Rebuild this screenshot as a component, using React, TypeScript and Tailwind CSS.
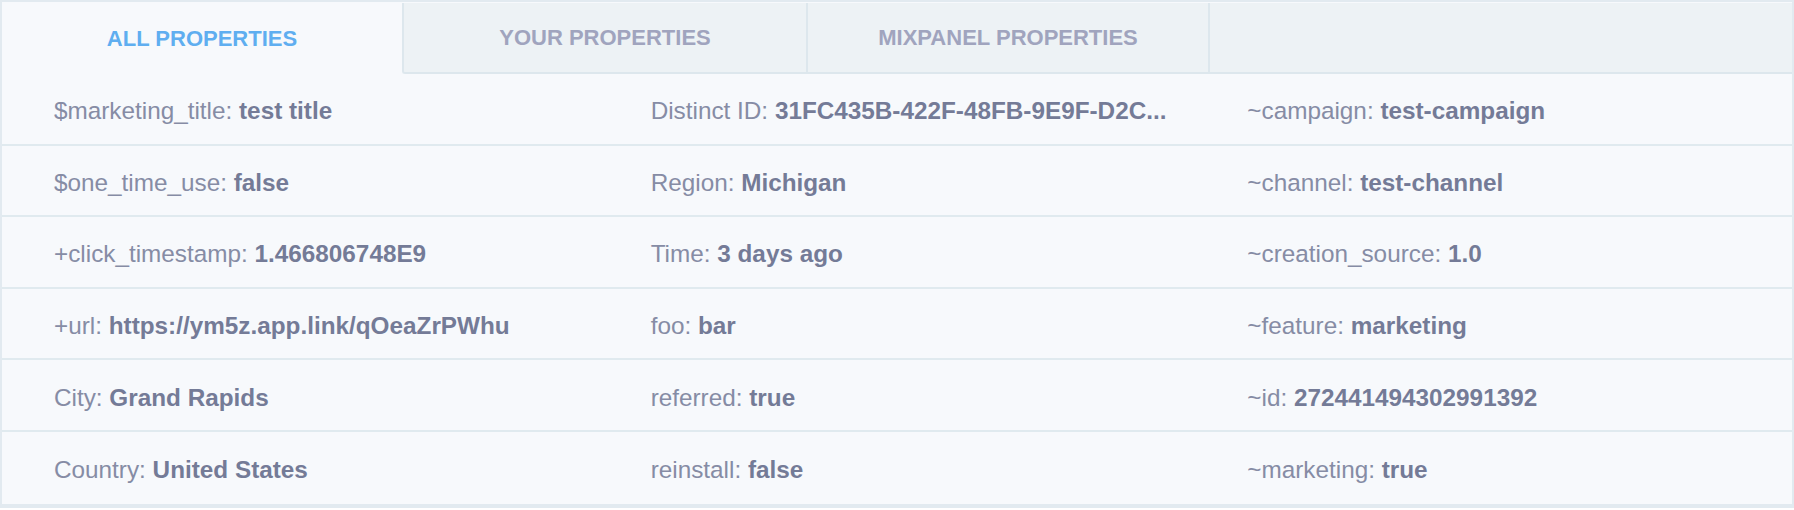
import React from "react";

const rows: [string, string][][] = [
  [
    ["$marketing_title", "test title"],
    ["Distinct ID", "31FC435B-422F-48FB-9E9F-D2C..."],
    ["~campaign", "test-campaign"],
  ],
  [
    ["$one_time_use", "false"],
    ["Region", "Michigan"],
    ["~channel", "test-channel"],
  ],
  [
    ["+click_timestamp", "1.466806748E9"],
    ["Time", "3 days ago"],
    ["~creation_source", "1.0"],
  ],
  [
    ["+url", "https://ym5z.app.link/qOeaZrPWhu"],
    ["foo", "bar"],
    ["~feature", "marketing"],
  ],
  [
    ["City", "Grand Rapids"],
    ["referred", "true"],
    ["~id", "272441494302991392"],
  ],
  [
    ["Country", "United States"],
    ["reinstall", "false"],
    ["~marketing", "true"],
  ],
];

export default function App() {
  return (
    <div
      className="w-[1794px] h-[510px] bg-white"
      style={{ fontFamily: '"Liberation Sans", Arial, sans-serif' }}
    >
      <div className="flex flex-col w-full border-2 border-b-[4px] border-[#e2eaf0] bg-[#f7f9fc]">
        <div className="flex h-[72px] pt-[1px]">
          <div className="w-[400px] flex items-center justify-center text-[22px] font-bold text-[#5faef0]">
            ALL PROPERTIES
          </div>
          <div className="w-[404px] flex items-center justify-center text-[22px] font-bold text-[#a0a4be] bg-[#edf2f5] border-l-2 border-b-2 border-[#dde7ed] rounded-bl-[3px]">
            YOUR PROPERTIES
          </div>
          <div className="w-[402px] flex items-center justify-center text-[22px] font-bold text-[#a0a4be] bg-[#edf2f5] border-l-2 border-b-2 border-[#dde7ed]">
            MIXPANEL PROPERTIES
          </div>
          <div className="flex-1 bg-[#edf2f5] border-l-2 border-b-2 border-[#dde7ed]" />
        </div>
        {rows.map((row, i) => (
          <div
            key={i}
            className={`grid grid-cols-3 h-[71.6px] pt-[5px] items-center ${
              i < rows.length - 1 ? "border-b-2 border-[#e0eaef]" : ""
            }`}
          >
            {row.map(([k, v], j) => (
              <div key={j} className="pl-[52px] text-[24.3px] leading-none whitespace-nowrap">
                <span className="text-[#868ca5]">{k}: </span>
                <span className="font-bold text-[#747b97]">{v}</span>
              </div>
            ))}
          </div>
        ))}
      </div>
    </div>
  );
}
